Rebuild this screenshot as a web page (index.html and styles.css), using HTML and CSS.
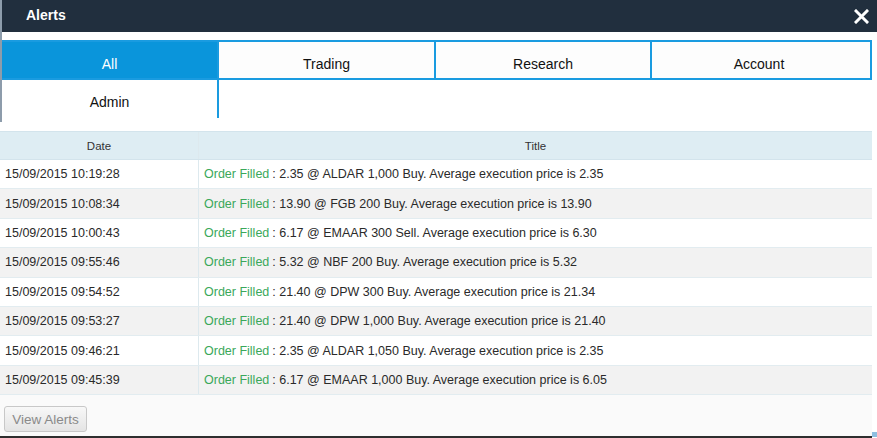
FILE: index.html
```html
<!DOCTYPE html>
<html>
<head>
<meta charset="utf-8">
<title>Alerts</title>
<link rel="stylesheet" href="styles.css">
</head>
<body>
<div class="dialog">
  <div class="top">
    <header class="titlebar">
      <span class="title">Alerts</span>
      <button class="close" aria-label="Close">
        <svg width="15" height="15" viewBox="0 0 15 15"><path d="M2 2 L13 13 M13 2 L2 13" stroke="#fff" stroke-width="3" stroke-linecap="square"/></svg>
      </button>
    </header>
    <nav class="tabs">
      <div class="tab row1 active">All</div>
      <div class="tab row1">Trading</div>
      <div class="tab row1">Research</div>
      <div class="tab row1 last">Account</div>
      <div class="tab row2">Admin</div>
    </nav>
  </div>
  <div class="grid">
    <div class="ghead">
      <div class="c1">Date</div>
      <div class="c2">Title</div>
    </div>
    <div class="grow"><div class="c1">15/09/2015 10:19:28</div><div class="c2"><span class="ok">Order Filled</span> : 2.35 @ ALDAR 1,000 Buy. Average execution price is 2.35</div></div>
    <div class="grow"><div class="c1">15/09/2015 10:08:34</div><div class="c2"><span class="ok">Order Filled</span> : 13.90 @ FGB 200 Buy. Average execution price is 13.90</div></div>
    <div class="grow"><div class="c1">15/09/2015 10:00:43</div><div class="c2"><span class="ok">Order Filled</span> : 6.17 @ EMAAR 300 Sell. Average execution price is 6.30</div></div>
    <div class="grow"><div class="c1">15/09/2015 09:55:46</div><div class="c2"><span class="ok">Order Filled</span> : 5.32 @ NBF 200 Buy. Average execution price is 5.32</div></div>
    <div class="grow"><div class="c1">15/09/2015 09:54:52</div><div class="c2"><span class="ok">Order Filled</span> : 21.40 @ DPW 300 Buy. Average execution price is 21.34</div></div>
    <div class="grow"><div class="c1">15/09/2015 09:53:27</div><div class="c2"><span class="ok">Order Filled</span> : 21.40 @ DPW 1,000 Buy. Average execution price is 21.40</div></div>
    <div class="grow"><div class="c1">15/09/2015 09:46:21</div><div class="c2"><span class="ok">Order Filled</span> : 2.35 @ ALDAR 1,050 Buy. Average execution price is 2.35</div></div>
    <div class="grow"><div class="c1">15/09/2015 09:45:39</div><div class="c2"><span class="ok">Order Filled</span> : 6.17 @ EMAAR 1,000 Buy. Average execution price is 6.05</div></div>
  </div>
  <footer class="foot">
    <button class="view">View Alerts</button>
    <span class="handle"></span>
  </footer>
</div>
</body>
</html>
```
FILE: styles.css
```css
html, body {
  margin: 0;
  padding: 0;
  background: #ffffff;
}
body {
  font-family: "Liberation Sans", Arial, sans-serif;
  color: #222;
}
.dialog {
  width: 877px;
  height: 438px;
  overflow: hidden;
}
.top {
  border-left: 2px solid #8d9cab;
  padding-bottom: 4px;
}
.titlebar {
  height: 32px;
  background: #212f3e;
  display: flex;
  align-items: center;
  justify-content: space-between;
  padding: 0 8px 0 24px;
}
.title {
  color: #fff;
  font-weight: bold;
  font-size: 14px;
  padding-bottom: 2px;
}
.close {
  border: 0;
  background: transparent;
  padding: 0;
  width: 15px;
  height: 15px;
  display: flex;
  cursor: pointer;
  margin-top: 1px;
}
.tabs {
  margin-top: 8px;
  width: 870px;
  display: grid;
  grid-template-columns: 217px 217px 216px 220px;
}
.tab {
  box-sizing: border-box;
  text-align: center;
  font-size: 14px;
  line-height: 16px;
  color: #111;
  background: #fdfdfd;
  border-right: 2px solid #1a9be0;
}
.row1 {
  height: 40px;
  padding-top: 14px;
  border-top: 2px solid #1a9be0;
  border-bottom: 2px solid #1a9be0;
}
.tab.last {
  padding-right: 4px;
}
.tab.active {
  background: #0a95db;
  color: #fff;
}
.row2 {
  height: 38px;
  padding-top: 14px;
  background: #fff;
}
.grid {
  margin-top: 9px;
  width: 872px;
  font-size: 12.5px;
  color: #2a2a2a;
}
.ghead {
  display: flex;
  height: 29px;
  box-sizing: border-box;
  background: #deedf3;
  border-top: 1px solid #d3e4ec;
  border-bottom: 1px solid #d3e4ec;
  font-size: 11.5px;
  color: #333;
}
.ghead .c1, .ghead .c2 {
  justify-content: center;
  padding: 0;
}
.grow {
  display: flex;
  height: 29.4px;
  box-sizing: border-box;
  border-bottom: 1px solid #e2ecf0;
  background: #fff;
}
.grow:nth-child(odd) {
  background: #f2f2f2;
}
.c1, .c2 {
  display: flex;
  align-items: center;
  padding-left: 5px;
  white-space: nowrap;
}
.c1 {
  width: 199px;
  box-sizing: border-box;
  border-right: 1px solid #dde9ee;
}
.c2 {
  flex: 1;
}
.ok {
  color: #3aa85a;
  margin-right: 3px;
}
.foot {
  position: relative;
  width: 872px;
  height: 43px;
  box-sizing: border-box;
  background: #fafafa;
  border-bottom: 2px solid #2e2e2e;
  padding: 11px 0 0 4px;
}
.view {
  height: 26px;
  width: 83px;
  padding: 0;
  border: 1px solid #c8c8c8;
  border-radius: 3px;
  background: linear-gradient(#f8f8f8, #e4e4e4);
  color: #8a8a8a;
  font-family: "Liberation Sans", Arial, sans-serif;
  font-size: 13.5px;
}
.handle {
  position: absolute;
  right: -5px;
  bottom: -1px;
  width: 5px;
  height: 5px;
  background: #8fbfe0;
}
```
